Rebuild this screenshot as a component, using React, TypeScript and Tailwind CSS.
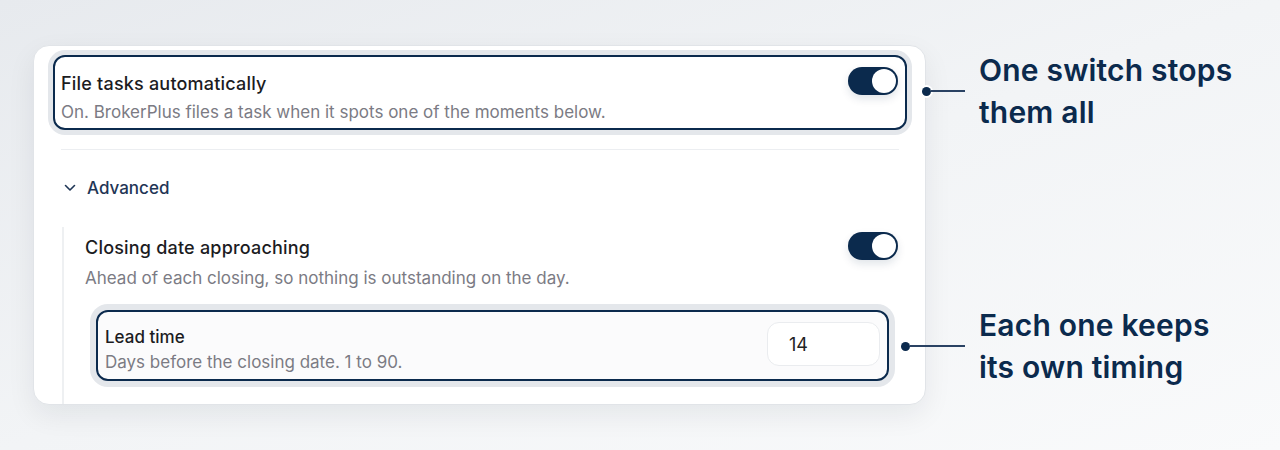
import React from 'react';

const Toggle = () => (
  <div className="w-[50px] h-[28px] rounded-full bg-[#0b2a4d] p-[2px] flex justify-end items-center shadow-[0_4px_8px_rgba(11,42,77,0.12)] shrink-0">
    <div className="w-[24px] h-[24px] rounded-full bg-white" />
  </div>
);

const Callout = ({ lines, top, left, width }: { lines: string[]; top: number; left: number; width: number }) => (
  <div className="absolute flex items-center" style={{ top, left }}>
    <div className="w-[9px] h-[9px] rounded-full bg-[#0b2a4d] ring-2 ring-white shrink-0" />
    <div className="h-[2px] bg-[#2a4263]" style={{ width }} />
    <div className="ml-[14px] text-[30px] leading-[42px] font-semibold text-[#0b2a4d] tracking-[0.2px]">
      {lines.map((l) => (
        <div key={l}>{l}</div>
      ))}
    </div>
  </div>
);

export default function App() {
  return (
    <div
      className="relative w-full h-[450px] overflow-hidden bg-gradient-to-br from-[#e7eaee] via-[#f2f4f6] to-[#f9fafb]"
      style={{ fontFamily: 'Inter, "Noto Sans", sans-serif' }}
    >
      <div className="pl-[33px] pt-[45px]">
        <div className="w-[893px] h-[360px] rounded-2xl bg-white border border-[#e1e4e8] shadow-[0_10px_28px_rgba(15,23,42,0.07)] overflow-hidden">
          <div className="pt-[9px] pl-[19px] pr-[18px]">
            {/* master switch row, highlighted */}
            <div className="rounded-xl border-2 border-[#0b2a4d] ring-[5px] ring-[#e4e7eb] bg-white pl-[6px] pr-[7px] pt-[15px] pb-[5px] flex justify-between">
              <div>
                <div className="text-[18px] leading-6 font-medium text-[#1c1c1f] tracking-[0.2px]">File tasks automatically</div>
                <div className="mt-[5px] text-[17px] leading-[22px] text-[#7b7b84]">
                  On. BrokerPlus files a task when it spots one of the moments below.
                </div>
              </div>
              <div className="-mt-[5px]">
                <Toggle />
              </div>
            </div>

            <div className="mt-[19px] mx-[8px] h-px bg-[#eceef1]" />

            <div className="mt-[26px] ml-[11px] flex items-center gap-[11px] text-[17px] leading-6 text-[#1f3656] font-medium">
              <svg width="12" height="8" viewBox="0 0 12 8" fill="none" stroke="currentColor" strokeWidth="1.6" strokeLinecap="round" strokeLinejoin="round">
                <path d="M1.5 1.5l4.5 4.5 4.5-4.5" />
              </svg>
              <span>Advanced</span>
            </div>

            {/* nested triggers */}
            <div className="mt-[27px] ml-[9px] border-l-2 border-[#eef0f2] pl-[21px] pr-[9px] pt-[5px] pb-10">
              <div className="flex justify-between">
                <div>
                  <div className="mt-[4px] text-[18px] leading-6 font-medium text-[#1c1c1f] tracking-[0.2px]">Closing date approaching</div>
                  <div className="mt-[7px] text-[17px] leading-[22px] text-[#7b7b84]">
                    Ahead of each closing, so nothing is outstanding on the day.
                  </div>
                </div>
                <Toggle />
              </div>

              <div className="mt-[21px] ml-[11px] mr-[9px] rounded-xl border-2 border-[#0b2a4d] ring-[6px] ring-[#e4e7eb] bg-[#fbfbfc] pl-[7px] pr-[7px] flex items-center justify-between">
                <div className="pt-[14px] pb-[6px]">
                  <div className="text-[17px] leading-[22px] font-medium text-[#1c1c1f]">Lead time</div>
                  <div className="mt-[3px] text-[17px] leading-[22px] text-[#7b7b84]">Days before the closing date. 1 to 90.</div>
                </div>
                <div className="-mt-[3px] w-[113px] h-[44px] rounded-xl border border-[#eaecef] bg-white flex items-center pl-[21px] text-[18px] text-[#222]">
                  14
                </div>
              </div>
            </div>
          </div>
        </div>
      </div>

      <Callout lines={['One switch stops', 'them all']} top={49} left={922} width={34} />
      <Callout lines={['Each one keeps', 'its own timing']} top={304} left={901} width={55} />
    </div>
  );
}
